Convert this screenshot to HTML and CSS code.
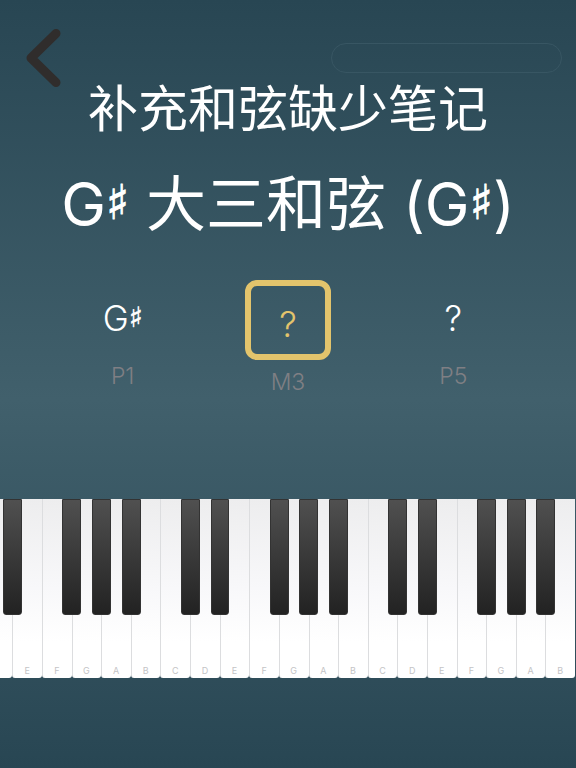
FILE: index.html
```
<!DOCTYPE html>
<html lang="zh-CN">
    <head>
        <meta charset="UTF-8" />
        <meta name="viewport" content="width=device-width, initial-scale=1.0" />
        <title>补充和弦缺少笔记</title>
        <link rel="stylesheet" href="styles.css">
    </head>
    <body>
        <header class="header">
            <button class="back" type="button" aria-label="返回">
                <svg width="36" height="60" viewBox="0 0 36 60" aria-hidden="true">
                    <path d="M31 5.500 L6 30 L31 54.500" />
                </svg>
            </button>
            <progress class="progress" value="0" max="10" aria-label="进度"></progress>
        </header>

        <main class="quiz">
            <h1 class="title">补充和弦缺少笔记</h1>
            <h2 class="chord">G<span class="sharp">♯</span> 大三和弦 (G<span class="sharp">♯</span>)</h2>

            <ul class="notes">
                <li class="note">
                    <button class="note-name" type="button">G<span class="sharp">♯</span></button>
                    <span class="interval">P1</span>
                </li>
                <li class="note">
                    <button class="note-name active" type="button">?</button>
                    <span class="interval">M3</span>
                </li>
                <li class="note">
                    <button class="note-name" type="button">?</button>
                    <span class="interval">P5</span>
                </li>
            </ul>
        </main>

        <!-- a black key belongs to the white key on its left -->
        <div class="keyboard">
            <div class="key"><button class="white" aria-label="D"></button><button class="black" aria-label="D♯"></button></div>
            <div class="key"><button class="white">E</button></div>
            <div class="key"><button class="white">F</button><button class="black" aria-label="F♯"></button></div>
            <div class="key"><button class="white">G</button><button class="black" aria-label="G♯"></button></div>
            <div class="key"><button class="white">A</button><button class="black" aria-label="A♯"></button></div>
            <div class="key"><button class="white">B</button></div>
            <div class="key"><button class="white">C</button><button class="black" aria-label="C♯"></button></div>
            <div class="key"><button class="white">D</button><button class="black" aria-label="D♯"></button></div>
            <div class="key"><button class="white">E</button></div>
            <div class="key"><button class="white">F</button><button class="black" aria-label="F♯"></button></div>
            <div class="key"><button class="white">G</button><button class="black" aria-label="G♯"></button></div>
            <div class="key"><button class="white">A</button><button class="black" aria-label="A♯"></button></div>
            <div class="key"><button class="white">B</button></div>
            <div class="key"><button class="white">C</button><button class="black" aria-label="C♯"></button></div>
            <div class="key"><button class="white">D</button><button class="black" aria-label="D♯"></button></div>
            <div class="key"><button class="white">E</button></div>
            <div class="key"><button class="white">F</button><button class="black" aria-label="F♯"></button></div>
            <div class="key"><button class="white">G</button><button class="black" aria-label="G♯"></button></div>
            <div class="key"><button class="white">A</button><button class="black" aria-label="A♯"></button></div>
            <div class="key"><button class="white">B</button></div>
        </div>
    </body>
</html>
```
FILE: styles.css
```
* {
    box-sizing: border-box;
}
body {
    margin: 0;
    min-height: 100vh;
    display: flex;
    flex-direction: column;
    padding-bottom: 90px;
    background: linear-gradient(#284653, #41606c 52%, #284653);
    color: #fff;
    font-family: Inter, "DejaVu Sans", "Noto Sans CJK SC", sans-serif;
}
button {
    padding: 0;
    border: 0;
    background: none;
    color: inherit;
    font: inherit;
    cursor: pointer;
}
.header {
    display: flex;
    justify-content: space-between;
    align-items: center;
    padding: 28px 14px 0 25px;
}
.back {
    display: flex;
}
.back path {
    fill: none;
    stroke: #302d2c;
    stroke-width: 9;
    stroke-linecap: round;
    stroke-linejoin: round;
}
.progress {
    appearance: none;
    width: 43%;
    height: 30px;
    border: 1px solid #385663;
    border-radius: 15px;
    background: none;
}
.progress::-webkit-progress-bar {
    background: none;
}
.title,
.chord {
    margin: 0;
    font-weight: 400;
    text-align: center;
}
.title {
    font-size: 50px;
    line-height: 42px;
}
.chord {
    margin-top: 38px;
    font-size: 60px;
    line-height: 72px;
}
.sharp {
    font-family: "DejaVu Sans", sans-serif;
    font-size: 80%;
    font-weight: 700;
    line-height: 0;
    vertical-align: 0.15em;
    -webkit-text-stroke: 0.02em currentColor;
}
.notes {
    display: grid;
    grid-template-columns: repeat(3, 1fr);
    margin: 40px 0 0;
    padding: 0 40px;
    list-style: none;
}
.note {
    display: flex;
    flex-direction: column;
    align-items: center;
}
.note-name {
    width: 86px;
    padding-top: 8px;
    font-size: 35px;
    font-weight: 300;
    line-height: 60px;
}
.note-name.active {
    margin-bottom: -6px;
    border: 6px solid #e3c46c;
    border-radius: 12px;
    color: #e3c46c;
}
.interval {
    margin-top: 16px;
    color: #7f7f84;
    font-size: 23px;
    font-weight: 300;
    line-height: 24px;
}
.keyboard {
    display: flex;
    justify-content: flex-end;
    height: 179px;
    margin-top: auto;
    padding-right: 1px;
    overflow: hidden;
}
.key {
    position: relative;
    flex: 0 0 5.15%;
}
.white {
    display: flex;
    align-items: flex-end;
    justify-content: center;
    width: 100%;
    height: 100%;
    padding: 0 1px 2px 0;
    border-left: 1px solid #dcdddf;
    border-radius: 0 0 3px 3px;
    background: linear-gradient(#ededee, #f8f8fa 50%, #fff 80%);
    color: #c4c4c6;
    font-size: 9px;
}
.black {
    position: absolute;
    z-index: 1;
    top: 0;
    left: 69%;
    width: 64%;
    height: 65%;
    border: 1px solid #333;
    border-radius: 0 0 3px 3px;
    background: linear-gradient(#505050, #222);
}
```
